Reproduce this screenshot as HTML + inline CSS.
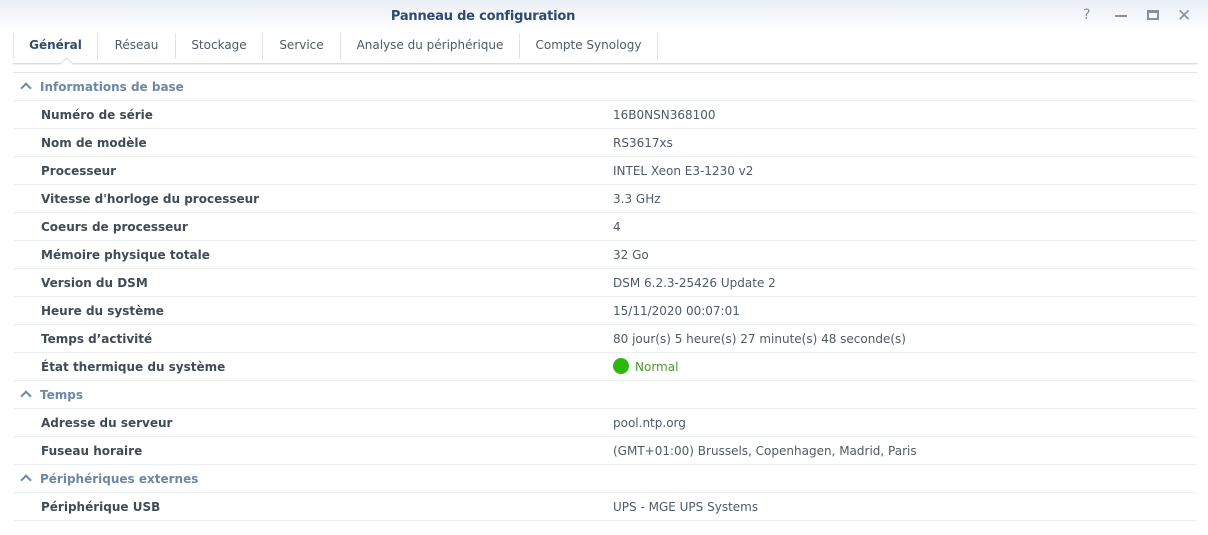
<!DOCTYPE html>
<html><head><meta charset="utf-8"><style>
*{margin:0;padding:0;box-sizing:border-box}
body{width:1208px;height:535px;background:#fff;font-family:"DejaVu Sans","Liberation Sans",sans-serif;overflow:hidden;position:relative}
.hdr{position:absolute;left:0;top:0;width:1208px;height:30px;background:linear-gradient(#e9eef5,#fff)}
.title{position:absolute;top:9px;left:0;width:966px;text-align:center;font-size:13px;font-weight:bold;color:#2f4a6e;letter-spacing:-0.2px}
.tabs{position:absolute;left:13px;top:31px;width:1184px;height:33px;border-bottom:1px solid #d8dde3;box-shadow:0 1px 1px #eee}
.tab{position:absolute;top:2px;height:26px;line-height:24px;font-size:12px;color:#4f5a66;border-left:1px solid #dfe3e8;text-align:center}
.line2{position:absolute;left:13px;top:72px;width:1184px;height:1px;background:#e2e6ea}
.row{position:absolute;left:13px;width:1184px;height:28px;border-bottom:1px solid #eceff2;font-size:12px;line-height:28px}
.l{position:absolute;left:28px;font-weight:bold;color:#414b55}
.v{position:absolute;left:600px;color:#4f5a66}
.sec .l{left:27px;color:#6d87a6}
.chev{position:absolute;left:9px;top:11px;width:8px;height:8px;border-left:2px solid #6d87a6;border-top:2px solid #6d87a6;transform:rotate(45deg)}
.ico{position:absolute;top:9px;color:#8a9099;font-size:13px}
</style></head><body>
<div class="hdr"></div>
<div class="title">Panneau de configuration</div>
<div class="ico" style="left:1083px;top:7px;font-size:14px">?</div>
<div style="position:absolute;left:1115px;top:15px;width:12px;height:2px;background:#8a9099"></div>
<div style="position:absolute;left:1147px;top:10px;width:12px;height:10px;border:2px solid #8a9099;border-top-width:3px"></div>
<div class="ico" style="left:1177px;top:6px;font-size:17px">✕</div>
<div class="tabs">
<div class="tab" style="left:0;width:84px;font-weight:bold;color:#2f4a6e">Général</div>
<div class="tab" style="left:84px;width:78px">Réseau</div>
<div class="tab" style="left:162px;width:87px">Stockage</div>
<div class="tab" style="left:249px;width:78px">Service</div>
<div class="tab" style="left:327px;width:179px">Analyse du périphérique</div>
<div class="tab" style="left:506px;width:138px">Compte Synology</div>
<div class="tab" style="left:644px;width:1px"></div>
<div style="position:absolute;left:49px;top:28px;width:9px;height:9px;background:#fff;border-left:1px solid #d8dde3;border-top:1px solid #d8dde3;transform:rotate(45deg)"></div>
</div>
<div class="line2"></div>
<div class="row sec" style="top:73px"><div class="chev"></div><div class="l">Informations de base</div></div>
<div class="row" style="top:101px"><div class="l">Numéro de série</div><div class="v">16B0NSN368100</div></div>
<div class="row" style="top:129px"><div class="l">Nom de modèle</div><div class="v">RS3617xs</div></div>
<div class="row" style="top:157px"><div class="l">Processeur</div><div class="v">INTEL Xeon E3-1230 v2</div></div>
<div class="row" style="top:185px"><div class="l">Vitesse d'horloge du processeur</div><div class="v">3.3 GHz</div></div>
<div class="row" style="top:213px"><div class="l">Coeurs de processeur</div><div class="v">4</div></div>
<div class="row" style="top:241px"><div class="l">Mémoire physique totale</div><div class="v">32 Go</div></div>
<div class="row" style="top:269px"><div class="l">Version du DSM</div><div class="v">DSM 6.2.3-25426 Update 2</div></div>
<div class="row" style="top:297px"><div class="l">Heure du système</div><div class="v">15/11/2020 00:07:01</div></div>
<div class="row" style="top:325px"><div class="l">Temps d’activité</div><div class="v">80 jour(s) 5 heure(s) 27 minute(s) 48 seconde(s)</div></div>
<div class="row" style="top:353px"><div class="l">État thermique du système</div><div class="v" style="color:#4c9a2a"><span style="display:inline-block;width:16px;height:16px;border-radius:50%;background:#2db80e;vertical-align:-3px;margin-right:6px"></span>Normal</div></div>
<div class="row sec" style="top:381px"><div class="chev"></div><div class="l">Temps</div></div>
<div class="row" style="top:409px"><div class="l">Adresse du serveur</div><div class="v">pool.ntp.org</div></div>
<div class="row" style="top:437px"><div class="l">Fuseau horaire</div><div class="v">(GMT+01:00) Brussels, Copenhagen, Madrid, Paris</div></div>
<div class="row sec" style="top:465px"><div class="chev"></div><div class="l">Périphériques externes</div></div>
<div class="row" style="top:493px"><div class="l">Périphérique USB</div><div class="v">UPS - MGE UPS Systems</div></div>
</body></html>
